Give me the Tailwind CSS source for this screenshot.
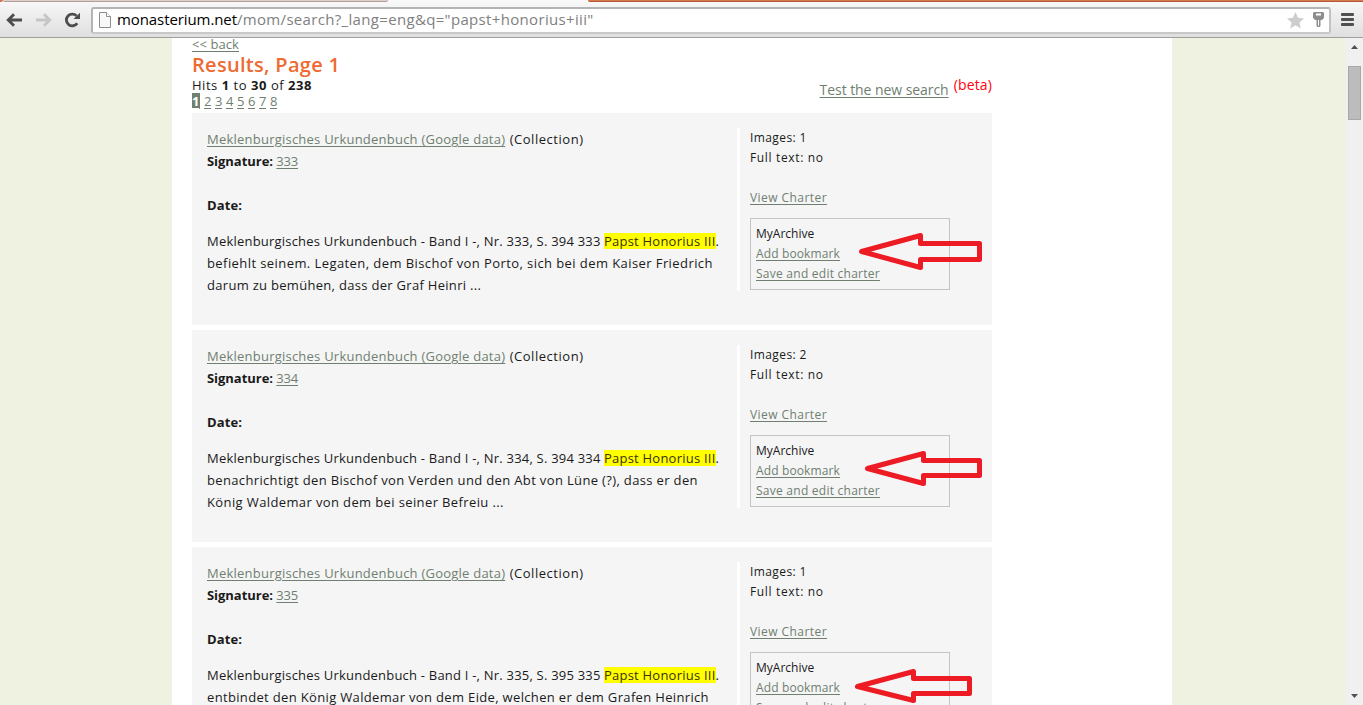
<!DOCTYPE html>
<html lang="en">
<head>
<meta charset="utf-8">
<title>Results, Page 1</title>
<script src="https://cdn.jsdelivr.net/npm/@tailwindcss/browser@4"></script>
</head>
<body class="relative flex h-[705px] w-[1363px] flex-col overflow-hidden bg-white font-['Open_Sans',sans-serif] text-[13px] text-[#1a1a1a]">
<!-- browser toolbar -->
<header class="z-10 flex h-[38px] shrink-0 flex-col border-b border-[#a0a0a0] bg-gradient-to-b from-[#f9f9f9] to-[#dfdfdf]">
  <div class="flex h-[2px] shrink-0">
    <div class="w-[3px] rounded-br bg-[#d4744f]"></div>
    <div class="w-[385px] rounded-b border-b border-[#b29f99] bg-[#ddd0cb]"></div>
    <div class="w-[200px]"></div>
    <div class="flex-1 rounded-bl border-b border-[#b35a3a] bg-[#d9774f]"></div>
  </div>
  <div class="flex flex-1 items-center">
    <svg class="ml-[6px] h-[14px] w-[17px]" viewBox="0 0 17 14" fill="none" stroke="#4d4d4d" stroke-width="2.8"><path d="M2.5 7H16M8 1.2L2.2 7L8 12.8"/></svg>
    <svg class="ml-[12px] h-[14px] w-[17px]" viewBox="0 0 17 14" fill="none" stroke="#c6c6c6" stroke-width="2.8"><path d="M1 7H14.5M9 1.2L14.8 7L9 12.8"/></svg>
    <svg class="ml-[12px] h-[16px] w-[17px]" viewBox="0 0 17 16" fill="none"><path d="M13.2 11.2A5.9 5.9 0 1 1 12.6 3.9" stroke="#4d4d4d" stroke-width="2.8"/><path d="M16 .8V7H9.5Z" fill="#4d4d4d"/></svg>
    <div class="ml-[10px] mt-px flex h-[27px] w-[1240px] items-center rounded-[3px] border-2 border-[#b4b4b4] border-b-[#c8c8c8] border-r-[#c2c2c2] bg-white">
      <svg class="ml-[6px] h-[16px] w-[12px]" viewBox="0 0 12 16" fill="#f8f8f8" stroke="#8c8c8c"><path d="M.5 .5H7.5L11.5 4.5V15.5H.5Z"/><path d="M7.5 .5V4.5H11.5" fill="#fff"/></svg>
      <div class="mb-[2px] ml-[6px] flex whitespace-pre text-[15px] leading-5"><span class="tracking-[-0.09px] text-black">monasterium.net</span><span class="tracking-[0.33px] text-[#808080]">/mom/search?_lang=eng&amp;q="papst+honorius+iii"</span></div>
      <svg class="ml-auto h-[17px] w-[17px]" viewBox="0 0 17 17" fill="#cdcdcd"><path d="M8.5 0L11 5.8L17 6.4L12.5 10.4L13.8 16.5L8.5 13.3L3.2 16.5L4.5 10.4L0 6.4L6 5.8Z"/></svg>
      <svg class="ml-[9px] mr-[5px] h-[16px] w-[11px]" viewBox="0 0 11 16"><path d="M1 0H10L11 1V6L9 8H7.5V14L6.5 15H4.5L3.5 14V8H2L0 6V1Z" fill="#8e8e8e"/><path d="M3 1.5H8V3.5H3ZM5 8H6V13.5H5Z" fill="#fff"/></svg>
    </div>
    <div class="ml-[10px] flex flex-col gap-[2px]">
      <div class="h-[3px] w-[13px] rounded-[1px] bg-[#505050]"></div>
      <div class="h-[3px] w-[13px] rounded-[1px] bg-[#505050]"></div>
      <div class="h-[3px] w-[13px] rounded-[1px] bg-[#505050]"></div>
    </div>
  </div>
</header>

<div class="flex min-h-0 flex-1">
  <div class="flex flex-1 bg-[#eff2e1] pl-[172px]">
    <main class="h-full w-[1000px] overflow-hidden bg-white pl-5">
      <div class="-mt-[2px] w-[800px]">
        <div class="flex h-[77px] justify-between">
          <div class="flex flex-col whitespace-nowrap leading-4">
            <a class="self-start tracking-[0.07px] text-[#6f8070] underline underline-offset-2">&lt;&lt; back</a>
            <h1 class="h-[25px] text-[20px] font-semibold leading-[26px] tracking-[0.3px] text-[#ee6a31]">Results, Page 1</h1>
            <div class="tracking-[0.53px]">Hits <b>1</b> to <b>30</b> of <b>238</b></div>
            <div class="flex gap-[4px] tracking-[-0.4px] text-[#6f8070]">
              <b class="w-[8px] bg-[#6f8070] text-white underline underline-offset-2">1</b><a class="w-[7px] underline underline-offset-2">2</a><a class="w-[7px] underline underline-offset-2">3</a><a class="w-[7px] underline underline-offset-2">4</a><a class="w-[7px] underline underline-offset-2">5</a><a class="w-[7px] underline underline-offset-2">6</a><a class="w-[7px] underline underline-offset-2">7</a><a class="w-[7px] underline underline-offset-2">8</a>
            </div>
          </div>
          <div class="flex gap-[5px] whitespace-nowrap pt-[39px] text-[14px] leading-5"><a class="pt-[5px] tracking-[-0.06px] text-[#6f8070] underline underline-offset-2">Test the new search</a><span class="tracking-[0.15px] text-[#ff0010]">(beta)</span></div>
        </div>

        <div class="flex flex-col gap-[5px]">
          <article class="flex h-[212px] bg-[#f5f5f5] pl-[15px] pt-[15px]">
            <div class="w-[530px] whitespace-nowrap leading-[22px]">
              <div><a class="tracking-[0.23px] text-[#6f8070] underline underline-offset-2">Meklenburgisches Urkundenbuch (Google data)</a> <span class="ml-px tracking-[0.54px]">(Collection)</span></div>
              <div><b class="tracking-[-0.04px]">Signature:</b> <a class="tracking-[-0.2px] text-[#6f8070] underline underline-offset-2">333</a></div>
              <div class="mt-[22px]"><b class="tracking-[0.1px]">Date:</b></div>
              <div class="mt-[14px]"><span class="tracking-[0.21px]">Meklenburgisches Urkundenbuch - Band I -, Nr. 333, S. 394 333</span> <span class="inline-block bg-[#ff0] leading-4 tracking-[0.23px] text-[#3c3008]">Papst Honorius III</span>.</div>
              <div class="tracking-[0.42px]">befiehlt seinem. Legaten, dem Bischof von Porto, sich bei dem Kaiser Friedrich</div>
              <div class="tracking-[0.3px]">darum zu bemühen, dass der Graf Heinri ...</div>
            </div>
            <div class="h-[163px] w-[216px] whitespace-nowrap border-l-[3px] border-white pl-[10px] text-[12px] leading-5">
              <div class="tracking-[0.4px]">Images: 1</div>
              <div class="tracking-[0.65px]">Full text: no</div>
              <div class="mt-5"><a class="tracking-[0.44px] text-[#6f8070] underline underline-offset-2">View Charter</a></div>
              <div class="relative mt-[10px] h-[72px] w-[200px] border border-[#c4c4c4] px-[5px] pt-[5px]">
                <div>MyArchive</div>
                <div><a class="tracking-[0.13px] text-[#6f8070] underline underline-offset-2">Add bookmark</a></div>
                <div><a class="tracking-[0.25px] text-[#6f8070] underline underline-offset-2">Save and edit charter</a></div>
                <svg class="absolute left-[105px] top-[10px] h-[50px] w-[130px]" viewBox="856 229 130 50" fill="none" stroke="#ed1c24" stroke-width="5" stroke-linejoin="round"><path d="M861.500 251.500L920.500 235.500V243.500H979.500V259.500H920.500V267.500Z"/></svg>
              </div>
            </div>
          </article>

          <article class="flex h-[212px] bg-[#f5f5f5] pl-[15px] pt-[15px]">
            <div class="w-[530px] whitespace-nowrap leading-[22px]">
              <div><a class="tracking-[0.23px] text-[#6f8070] underline underline-offset-2">Meklenburgisches Urkundenbuch (Google data)</a> <span class="ml-px tracking-[0.54px]">(Collection)</span></div>
              <div><b class="tracking-[-0.04px]">Signature:</b> <a class="tracking-[-0.2px] text-[#6f8070] underline underline-offset-2">334</a></div>
              <div class="mt-[22px]"><b class="tracking-[0.1px]">Date:</b></div>
              <div class="mt-[14px]"><span class="tracking-[0.21px]">Meklenburgisches Urkundenbuch - Band I -, Nr. 334, S. 394 334</span> <span class="inline-block bg-[#ff0] leading-4 tracking-[0.23px] text-[#3c3008]">Papst Honorius III</span>.</div>
              <div class="tracking-[0.35px]">benachrichtigt den Bischof von Verden und den Abt von Lüne (?), dass er den</div>
              <div class="tracking-[0.38px]">König Waldemar von dem bei seiner Befreiu ...</div>
            </div>
            <div class="h-[163px] w-[216px] whitespace-nowrap border-l-[3px] border-white pl-[10px] text-[12px] leading-5">
              <div class="tracking-[0.4px]">Images: 2</div>
              <div class="tracking-[0.65px]">Full text: no</div>
              <div class="mt-5"><a class="tracking-[0.44px] text-[#6f8070] underline underline-offset-2">View Charter</a></div>
              <div class="relative mt-[10px] h-[72px] w-[200px] border border-[#c4c4c4] px-[5px] pt-[5px]">
                <div>MyArchive</div>
                <div><a class="tracking-[0.13px] text-[#6f8070] underline underline-offset-2">Add bookmark</a></div>
                <div><a class="tracking-[0.25px] text-[#6f8070] underline underline-offset-2">Save and edit charter</a></div>
                <svg class="absolute left-[105px] top-[10px] h-[50px] w-[130px]" viewBox="856 446 130 50" fill="none" stroke="#ed1c24" stroke-width="5" stroke-linejoin="round"><path d="M867.500 468.500L923.500 453.500V460.500H979.500V475.500H923.500V483.500Z"/></svg>
              </div>
            </div>
          </article>

          <article class="flex h-[212px] bg-[#f5f5f5] pl-[15px] pt-[15px]">
            <div class="w-[530px] whitespace-nowrap leading-[22px]">
              <div><a class="tracking-[0.23px] text-[#6f8070] underline underline-offset-2">Meklenburgisches Urkundenbuch (Google data)</a> <span class="ml-px tracking-[0.54px]">(Collection)</span></div>
              <div><b class="tracking-[-0.04px]">Signature:</b> <a class="tracking-[-0.2px] text-[#6f8070] underline underline-offset-2">335</a></div>
              <div class="mt-[22px]"><b class="tracking-[0.1px]">Date:</b></div>
              <div class="mt-[14px]"><span class="tracking-[0.21px]">Meklenburgisches Urkundenbuch - Band I -, Nr. 335, S. 395 335</span> <span class="inline-block bg-[#ff0] leading-4 tracking-[0.23px] text-[#3c3008]">Papst Honorius III</span>.</div>
              <div class="tracking-[0.34px]">entbindet den König Waldemar von dem Eide, welchen er dem Grafen Heinrich</div>
            </div>
            <div class="h-[163px] w-[216px] whitespace-nowrap border-l-[3px] border-white pl-[10px] text-[12px] leading-5">
              <div class="tracking-[0.4px]">Images: 1</div>
              <div class="tracking-[0.65px]">Full text: no</div>
              <div class="mt-5"><a class="tracking-[0.44px] text-[#6f8070] underline underline-offset-2">View Charter</a></div>
              <div class="relative mt-[10px] h-[72px] w-[200px] border border-[#c4c4c4] px-[5px] pt-[5px]">
                <div>MyArchive</div>
                <div><a class="tracking-[0.13px] text-[#6f8070] underline underline-offset-2">Add bookmark</a></div>
                <div><a class="tracking-[0.25px] text-[#6f8070] underline underline-offset-2">Save and edit charter</a></div>
                <svg class="absolute left-[100px] top-[10px] h-[50px] w-[130px]" viewBox="851 663 130 50" fill="none" stroke="#ed1c24" stroke-width="5" stroke-linejoin="round"><path d="M857.500 686.500L913.500 671.500V678.500H969.500V693.500H913.500V700.500Z"/></svg>
              </div>
            </div>
          </article>
        </div>
      </div>
    </main>
  </div>
  <!-- scrollbar -->
  <div class="flex w-[17px] flex-col items-center bg-[#f0f0f0]">
    <svg class="mt-[7px] h-[4px] w-[7px]" viewBox="0 0 7 4" fill="#505050"><path d="M0 4L3.500 0L7 4Z"/></svg>
    <div class="mt-[17px] h-[54px] w-[13px] border border-[#a8a8a8] bg-[#bcbcbc]"></div>
    <svg class="mb-[7px] mt-auto h-[4px] w-[7px]" viewBox="0 0 7 4" fill="#505050"><path d="M0 0H7L3.500 4Z"/></svg>
  </div>
</div>
</body>
</html>
